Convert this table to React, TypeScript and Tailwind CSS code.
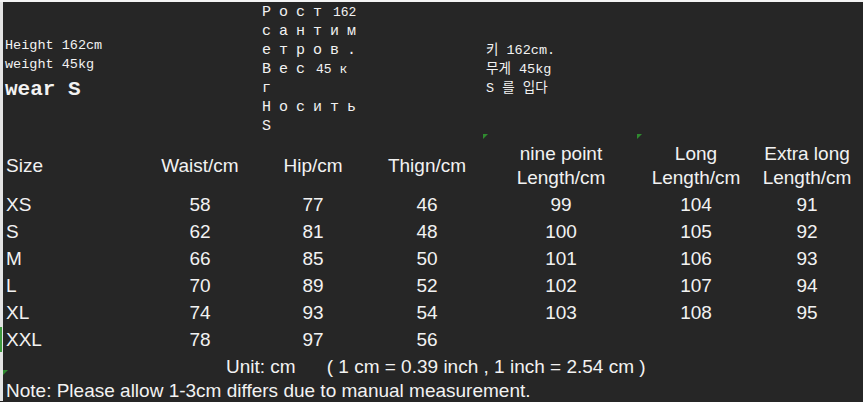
const headers = [
  { lines: ['Size'], align: 'left' },
  { lines: ['Waist/cm'] },
  { lines: ['Hip/cm'] },
  { lines: ['Thign/cm'] },
  { lines: ['nine point', 'Length/cm'] },
  { lines: ['Long', 'Length/cm'] },
  { lines: ['Extra long', 'Length/cm'] },
]

const rows = [
  ['XS', '58', '77', '46', '99', '104', '91'],
  ['S', '62', '81', '48', '100', '105', '92'],
  ['M', '66', '85', '50', '101', '106', '93'],
  ['L', '70', '89', '52', '102', '107', '94'],
  ['XL', '74', '93', '54', '103', '108', '95'],
  ['XXL', '78', '97', '56', '', '', ''],
]

const cols = 'grid grid-cols-[134px_120px_106px_122px_146px_124px_98px]'

function Ru({ t, n }: { t: string; n?: string }) {
  return (
    <div className="h-[19px] leading-[19px] whitespace-pre">
      <span className="tracking-[8px]">{t}</span>
      {n && <span className="ml-[3px] text-[13px]">{n}</span>}
    </div>
  )
}

export default function App() {
  return (
    <div className="relative w-[863px] h-[402px] overflow-hidden bg-[#262626] text-[#f2f2f2] font-['Liberation_Sans',Arial,sans-serif]">
      <div className="h-[2px] bg-[#f4f4f4]" />
      <div className="border-l-[3px] border-[#e4e4e4]">
        <div className="flex h-[140px]">
          <div className="w-[259px] pl-[2px] pt-[34px] font-['Liberation_Mono','Noto_Sans_CJK_SC',monospace]">
            <div className="h-[19px] leading-[19px] text-[13.5px]">Height 162cm</div>
            <div className="h-[19px] leading-[19px] text-[13.5px]">weight 45kg</div>
            <div className="h-[32px] leading-[32px] text-[21px] font-bold">wear S</div>
          </div>
          <div className="w-[224px] pt-[1px] text-[15px] font-['Liberation_Mono',monospace]">
            <Ru t="Рост" n="162" />
            <Ru t="сантим" />
            <Ru t="етров." />
            <Ru t="Вес" n="45 к" />
            <Ru t="г" />
            <Ru t="Носить" />
            <Ru t="S" />
          </div>
          <div className="pt-[39px] text-[13.5px] font-['Liberation_Mono','Noto_Sans_CJK_KR',monospace]">
            <div className="h-[19px] leading-[19px]">키 162cm.</div>
            <div className="h-[19px] leading-[19px]">무게 45kg</div>
            <div className="h-[19px] leading-[19px] whitespace-pre">S 를 입다</div>
          </div>
        </div>

        <div className="text-[19px]">
          <div className={`${cols} pl-[3px] h-[49px] pb-[5px] items-center`}>
            {headers.map((h, i) => (
              <div key={i} className={`${i === 0 ? 'text-left' : 'text-center whitespace-nowrap'} leading-[24px]`}>
                {h.lines.map((l) => (
                  <div key={l}>{l}</div>
                ))}
              </div>
            ))}
          </div>
          {rows.map((r) => (
            <div key={r[0]} className={`${cols} pl-[3px] h-[27px] items-center leading-[27px]`}>
              {r.map((c, i) => (
                <div key={i} className={i === 0 ? 'text-left' : 'text-center'}>
                  {c}
                </div>
              ))}
            </div>
          ))}
          <div className="h-[26px] leading-[28px] pl-[223px] whitespace-pre">
            Unit: cm<span className="ml-[31px]">( 1 cm = 0.39 inch , 1 inch = 2.54 cm )</span>
          </div>
          <div className="h-[22px] leading-[24px] pl-[3px]">
            Note: Please allow 1-3cm differs due to manual measurement.
          </div>
        </div>
      </div>

      <div className="absolute left-0 top-[327px] w-[2px] h-[25px] bg-[#3f9a3f]" />
      <div className="absolute left-[3px] top-[370px] w-0 h-0 border-t-[5px] border-r-[5px] border-t-[#2f8a2f] border-r-transparent" />
      <div className="absolute left-[483px] top-[134px] w-0 h-0 border-t-[5px] border-r-[5px] border-t-[#2f8a2f] border-r-transparent" />
      <div className="absolute left-[637px] top-[134px] w-0 h-0 border-t-[5px] border-r-[5px] border-t-[#2f8a2f] border-r-transparent" />
    </div>
  )
}
